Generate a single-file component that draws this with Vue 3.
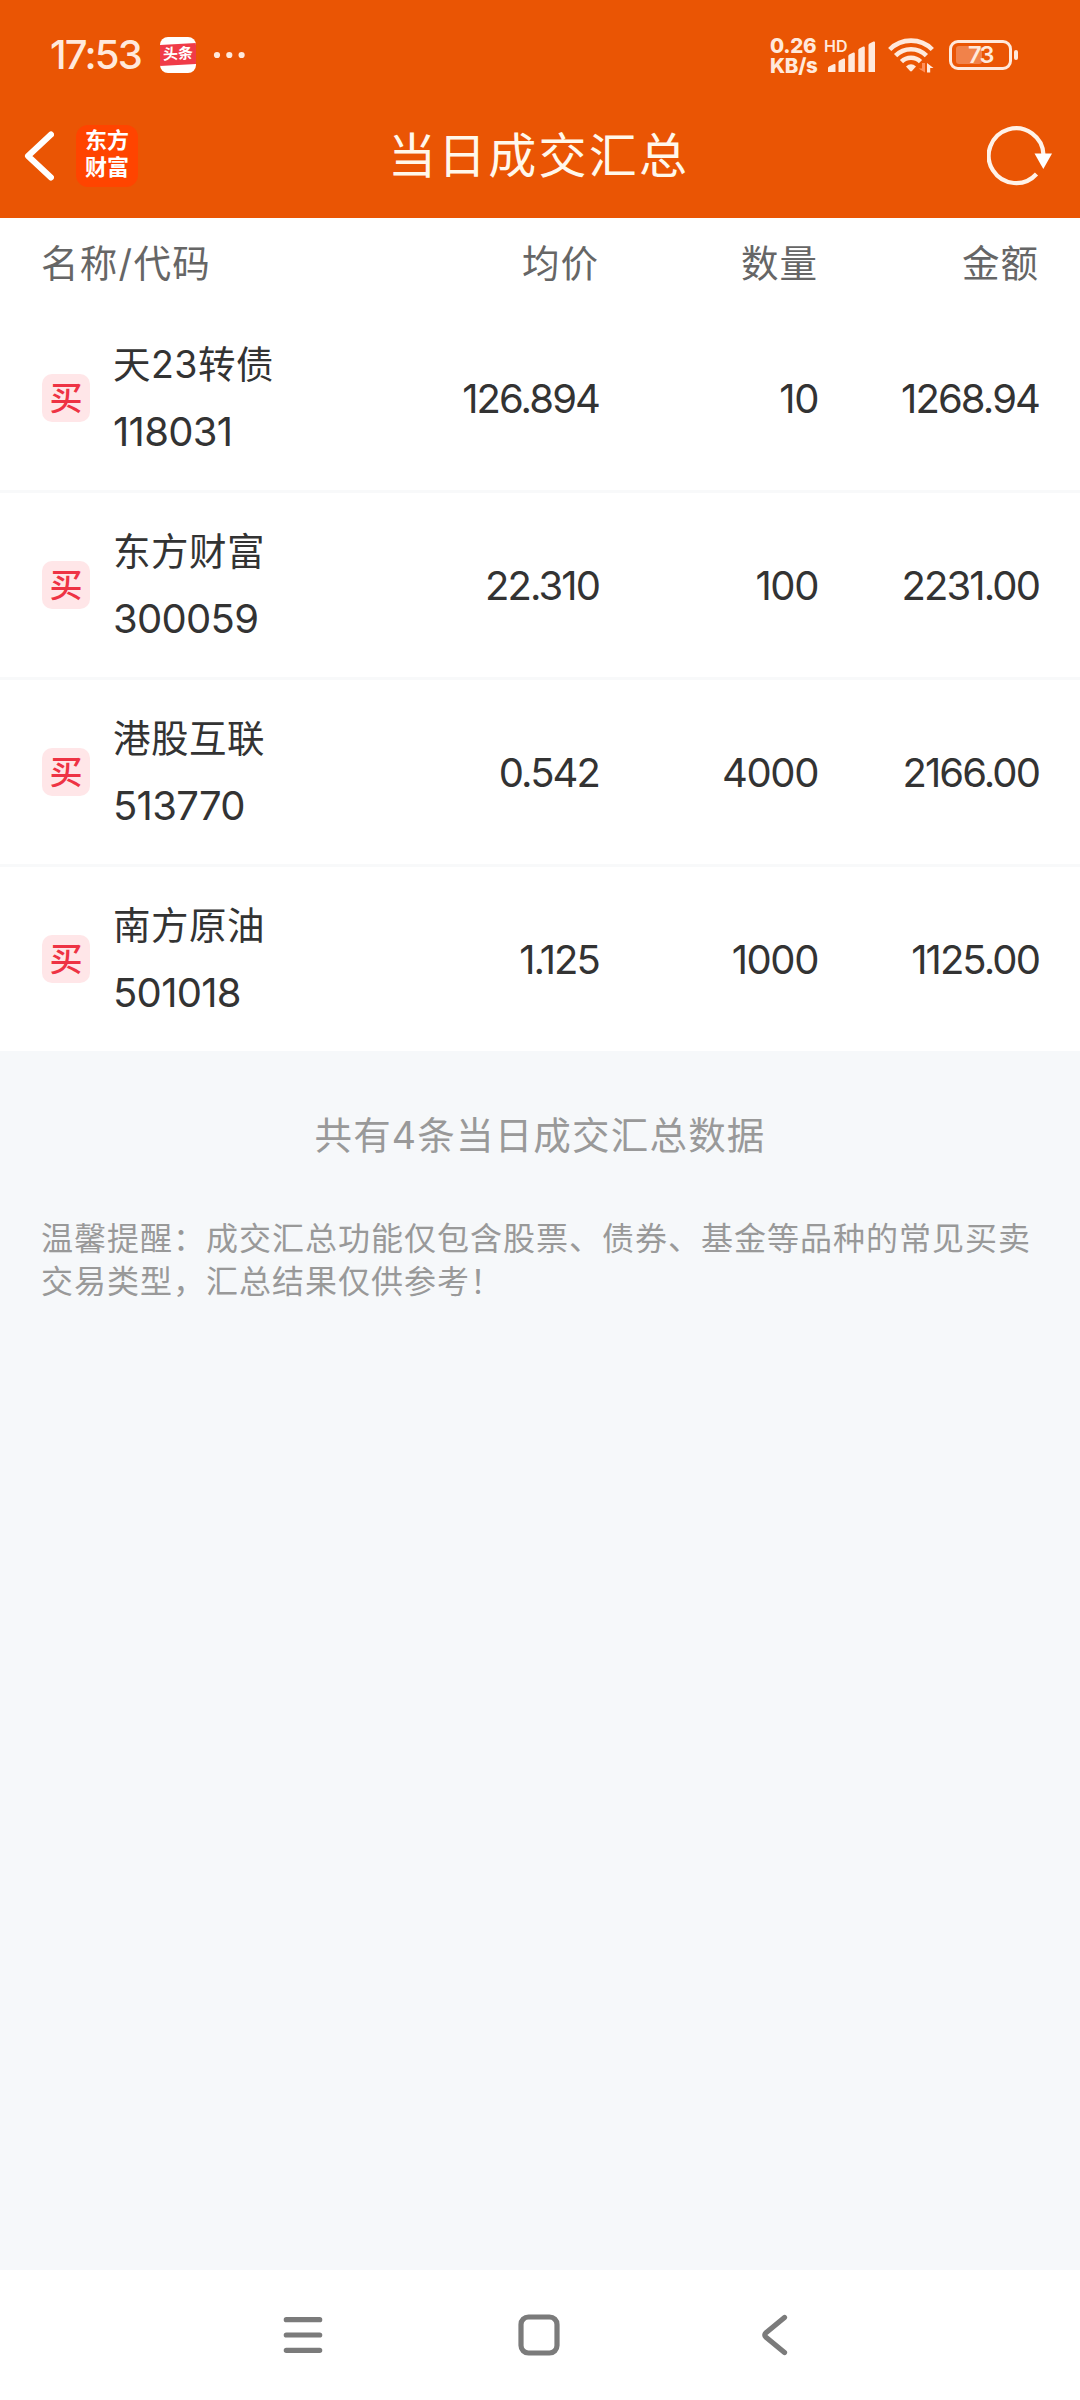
<template>
  <div class="page">
    <header class="top">
      <!-- Status bar -->
      <div class="status">
        <div class="status-left">
          <span class="time">17:53</span>
          <span class="toutiao"><b>头条</b></span>
          <svg class="dots" viewBox="0 0 32 8">
            <circle cx="4" cy="4" r="3.1" />
            <circle cx="16.3" cy="4" r="3.1" />
            <circle cx="28.6" cy="4" r="3.1" />
          </svg>
        </div>

        <div class="status-right">
          <div class="speed">
            <span>0.26</span>
            <span>KB/s</span>
          </div>
          <div class="signal">
            <span class="hd">HD</span>
            <svg viewBox="0 0 50 34">
              <path d="M2 34v-4q0-1 1-1.500l5-2.500q1.500-.5 1.500 1V34z" />
              <path d="M12.500 34v-10q0-1 1-1.500l4-2q1.500-.5 1.500 1V34z" />
              <path d="M22.300 34v-16q0-1 1-1.500l4-2q1.500-.5 1.500 1V34z" />
              <path d="M32.300 34v-22q0-1 1-1.500l4-2q1.500-.5 1.500 1V34z" />
              <path d="M42.500 34v-27q0-1 1-1.500l4-2q1.500-.5 1.500 1V34z" />
            </svg>
          </div>
          <svg class="wifi" viewBox="0 0 46 36">
            <g fill="none" stroke="#ffe9dc" stroke-width="4.600">
              <path d="M1.700 12.500a30 30 0 0 1 42.600 0" />
              <path d="M7.600 18.600a21.700 21.700 0 0 1 30.800 0" />
              <path d="M13.500 24.700a13.500 13.500 0 0 1 19 0" />
            </g>
            <path d="M18 29.500q5-4.500 10 0l-3.800 4.300q-1.200 1.200-2.400 0z" fill="#ffe9dc" />
            <path d="M37 26v9.500l-6.500-4h3.500V26z" fill="#ff8f58" />
            <path d="M39 35.500V26l6.500 5h-3.300v4.500z" fill="#ffe9dc" />
          </svg>
          <div class="battery">
            <div class="battery-body">
              <i class="battery-level" :style="{ width: battery * 0.36 + 'px' }"></i>
              <span>{{ battery }}</span>
            </div>
            <i class="battery-cap"></i>
          </div>
        </div>
      </div>

      <!-- Title bar -->
      <div class="titlebar">
        <div class="title-side">
          <svg class="back" viewBox="0 0 30 50">
            <path d="M27 3.500L4 25L27 46.500" />
          </svg>
          <span class="logo"><b>东方</b><b>财富</b></span>
        </div>
        <h1>当日成交汇总</h1>
        <div class="title-side end">
          <svg class="refresh" viewBox="0 0 66 60">
            <path d="M56.500 29A27.400 27.400 0 1 0 49.500 48" fill="none" stroke="#fff2e8" stroke-width="4.200" />
            <path d="M47.500 27.500h17.500l-8.700 15.500z" fill="#fff" />
          </svg>
        </div>
      </div>
    </header>

    <main>
      <section class="table">
        <div class="grid head">
          <span class="first">名称/代码</span>
          <span>均价</span>
          <span>数量</span>
          <span>金额</span>
        </div>
        <div v-for="d in deals" :key="d.code" class="grid row">
          <div class="stock">
            <span class="badge">买</span>
            <div class="stock-text">
              <span class="name">{{ d.name }}</span>
              <span class="code">{{ d.code }}</span>
            </div>
          </div>
          <span class="num">{{ d.price }}</span>
          <span class="num qty">{{ d.qty }}</span>
          <span class="num">{{ d.amount }}</span>
        </div>
      </section>

      <p class="total">共有{{ deals.length }}条当日成交汇总数据</p>
      <p class="tip">温馨提醒：成交汇总功能仅包含股票、债券、基金等品种的常见买卖交易类型，汇总结果仅供参考！</p>
    </main>

    <!-- System navigation -->
    <nav class="sysnav">
      <svg viewBox="0 0 50 50"><path d="M8.300 9.700h33.400M8.300 25h33.400M8.300 40.300h33.400" /></svg>
      <svg viewBox="0 0 50 50"><rect x="7" y="7" width="36" height="36" rx="7.500" /></svg>
      <svg viewBox="0 0 50 50"><path d="M34.500 7.500L16 22.700Q13.500 25 16 27.300L34.500 42.500" /></svg>
    </nav>
  </div>
</template>

<script setup>
const battery = 73

const deals = [
  { name: '天23转债', code: '118031', price: '126.894', qty: '10', amount: '1268.94' },
  { name: '东方财富', code: '300059', price: '22.310', qty: '100', amount: '2231.00' },
  { name: '港股互联', code: '513770', price: '0.542', qty: '4000', amount: '2166.00' },
  { name: '南方原油', code: '501018', price: '1.125', qty: '1000', amount: '1125.00' }
]
</script>

<style>
body { margin: 0; background: #f6f8fa; }
</style>

<style scoped>
.page {
  width: 1080px; height: 2400px;
  display: flex; flex-direction: column;
  background: #f6f8fa;
  font-family: Inter, "Noto Sans CJK SC", sans-serif;
  color: #333;
  overflow: hidden;
}
svg { display: block; flex: none; }

/* ===== Top ===== */
.top { background: #ea5504; height: 218px; box-sizing: border-box; padding-bottom: 16px; }
.status {
  height: 109px; box-sizing: border-box; padding: 0 63px 0 50px;
  display: flex; justify-content: space-between; align-items: center;
  color: #ffe9dc;
}
.status-left, .status-right { display: flex; align-items: center; }
.time { font-size: 40px; font-weight: 500; width: 110px; line-height: 48px; white-space: nowrap; letter-spacing: -1.800px; }
.toutiao {
  width: 36px; height: 36px; border-radius: 8px; overflow: hidden;
  background: #fff; display: flex; align-items: center;
}
.toutiao b {
  width: 36px; height: 21px; background: #f03b48; color: #fff;
  font-size: 15px; line-height: 20px; text-align: center; font-weight: 700;
  transform: skewY(-3deg);
}
.dots { width: 32px; height: 8px; margin-left: 17px; fill: #ffe9dc; }

.speed {
  display: flex; flex-direction: column; width: 56px; padding-top: 2px;
  font-size: 20.500px; line-height: 19.500px; font-weight: 800; white-space: nowrap; letter-spacing: -.3px;
}
.signal { position: relative; width: 50px; height: 34px; margin-right: 12px; }
.signal svg { width: 50px; height: 34px; fill: #ffe9dc; }
.hd { position: absolute; left: -2px; top: 0; font-size: 16px; line-height: 16px; font-weight: 600; }
.wifi { width: 46px; height: 36px; margin-right: 15px; }
.battery { display: flex; align-items: center; gap: 2px; margin-right: -1px; }
.battery-body {
  position: relative; width: 63px; height: 30px; box-sizing: border-box;
  border: 3px solid #ffe9dc; border-radius: 9px;
  display: flex; align-items: center; justify-content: center;
  font-size: 23.500px; line-height: 24px; font-weight: 600; letter-spacing: -1.500px;
}
.battery-body span { position: relative; }
.battery-level { position: absolute; left: 4px; top: 3px; bottom: 3px; background: #f1824a; border-radius: 3px; }
.battery-cap { width: 4px; height: 10px; border-radius: 2px; background: #ffe9dc; }

.titlebar { height: 93px; display: flex; align-items: center; justify-content: space-between; padding: 0 27px 0 24px; }
.title-side { width: 160px; display: flex; align-items: center; }
.title-side.end { justify-content: flex-end; }
.back { width: 30px; height: 50px; fill: none; stroke: #fff; stroke-width: 6; stroke-linecap: round; stroke-linejoin: round; }
.logo {
  width: 62px; height: 62px; margin-left: 22px; border-radius: 12px;
  display: flex; flex-direction: column; align-items: center;
  background: #ff4400; color: #fff;
  font-family: "Noto Sans CJK SC", sans-serif;
  font-size: 22px; line-height: 27px;
}
.logo b { font-weight: 700; }
.titlebar h1 { margin: 0; font-size: 48px; font-weight: 400; letter-spacing: 2.200px; color: #fff8ec; line-height: 70px; }
.refresh { width: 66px; height: 60px; }

/* ===== Table ===== */
main { flex: 1; }
.table { background: #fff; }
.grid { display: grid; grid-template-columns: 358px 200px 219px 221px; padding: 0 41px; align-items: center; }
.head { height: 88px; box-sizing: border-box; padding-bottom: 3px; color: #666; font-size: 37.500px; letter-spacing: 1px; text-align: right; }
.head .first { text-align: left; letter-spacing: 1.300px; }
.row { height: 184px; }
.row + .row { border-top: 3px solid #f8f9fa; }
.stock { display: flex; align-items: center; }
.badge {
  width: 48px; height: 48px; margin-left: 1px; border-radius: 10px;
  background: #ffe6e8; color: #ee3344;
  font-size: 33px; line-height: 48px; text-align: center; font-weight: 500;
}
.stock-text { display: flex; flex-direction: column; margin-left: 23px; white-space: nowrap; }
.stock-text span { line-height: 67px; }
.name { font-size: 37.500px; letter-spacing: .5px; }
.code { font-size: 40px; letter-spacing: -.7px; }
.num { font-size: 40px; text-align: right; white-space: nowrap; letter-spacing: -1.900px; }
.num.qty { letter-spacing: -1.400px; }

.total { margin: 57px 0 0; text-align: center; font-size: 37.500px; line-height: 56px; letter-spacing: 1.200px; color: #999; }
.tip { margin: 53px 41px 0; font-size: 32px; line-height: 43px; letter-spacing: 1px; color: #999; }

/* ===== System nav ===== */
.sysnav { height: 130px; background: #fff; display: flex; justify-content: center; gap: 186px; align-items: center; padding-right: 2px; }
.sysnav svg { width: 50px; height: 50px; fill: none; stroke: #7b7b7b; stroke-width: 5.200; stroke-linecap: round; stroke-linejoin: round; }
</style>
